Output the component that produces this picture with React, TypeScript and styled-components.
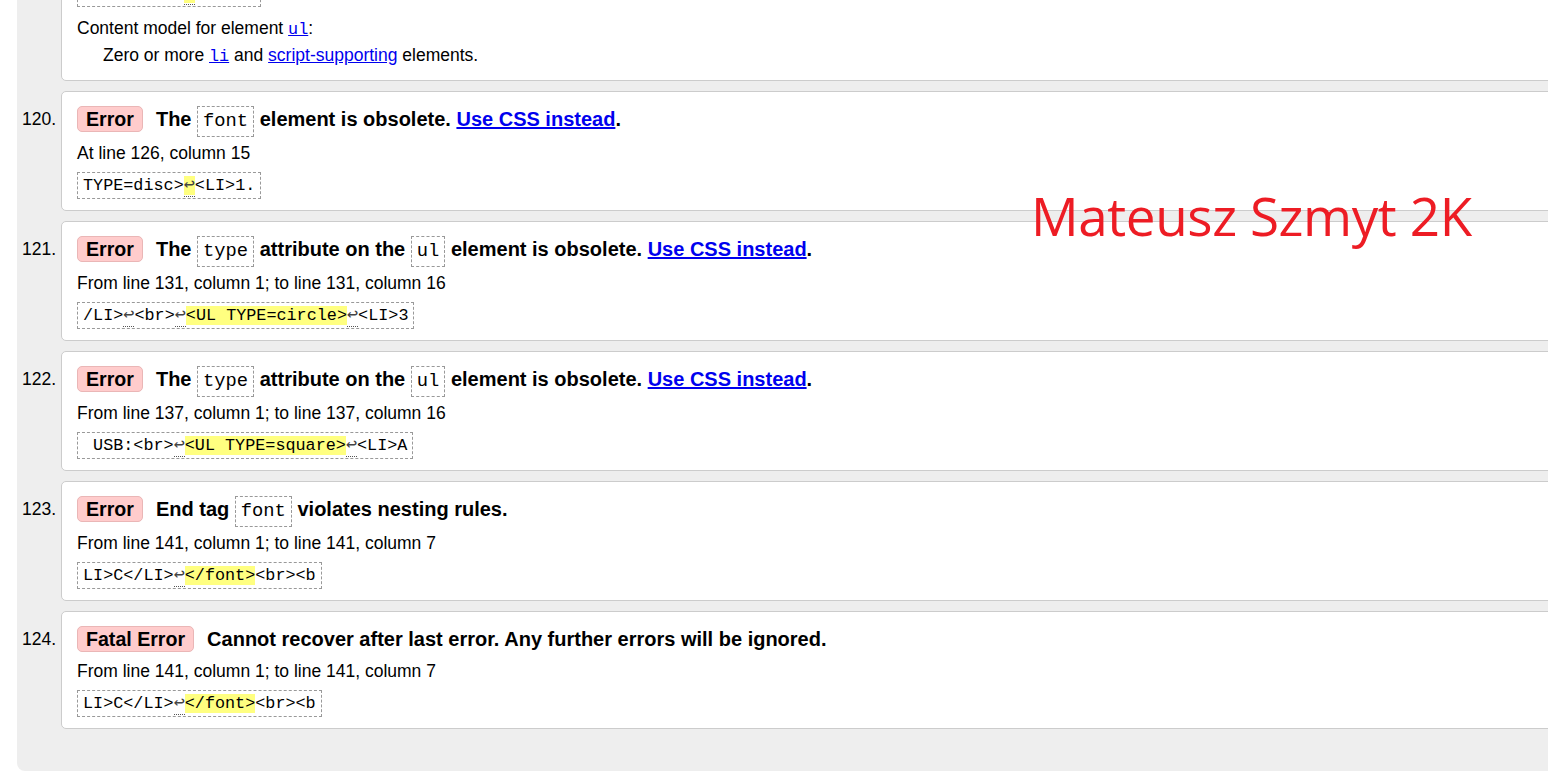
import React from "react";
import styled, { createGlobalStyle } from "styled-components";

const GlobalStyle = createGlobalStyle`
  html, body { margin: 0; padding: 0; background: #fff; }
  body {
    font-family: "Liberation Sans", Arial, sans-serif;
    font-size: 17.5px;
    color: #000;
    overflow: hidden;
  }
`;

const Page = styled.div`
  position: relative;
  height: 777px;
  overflow: hidden;
  padding-left: 17px;
`;

const Panel = styled.div`
  background: #eee;
  margin-top: -101px;
  width: calc(100% + 40px);
  border-bottom-left-radius: 8px;
  padding: 0 0 42px 5px;
  box-sizing: border-box;
`;

const List = styled.ol`
  list-style: none;
  margin: 0;
  padding: 0;
  display: flex;
  flex-direction: column;
  gap: 10px;
`;

const Item = styled.li`
  display: flex;
  align-items: flex-start;
`;

const Num = styled.div`
  width: 39px;
  flex: none;
  padding-top: 12px;
  line-height: 32px;
`;

const Card = styled.div`
  flex: 1;
  background: #fff;
  border: 1px solid #ccc;
  border-radius: 5px;
  padding: 11px 15px 11px 15px;
`;

const Heading = styled.p`
  margin: 0;
  font-size: 20px;
  font-weight: bold;
  line-height: 32px;
  white-space: nowrap;
`;

const Badge = styled.strong`
  display: inline-block;
  font-size: 19.6px;
  background: #fcc;
  border: 1px solid #eab6b6;
  border-radius: 5px;
  padding: 0 8px;
  line-height: 24px;
  margin-right: 13px;
`;

const InlineCode = styled.code`
  display: inline-block;
  font-family: "Liberation Mono", "DejaVu Sans Mono", monospace;
  font-weight: normal;
  font-size: 18.8px;
  line-height: 21px;
  padding: 4px 5px;
  border: 1px dashed #999;
`;

const Location = styled.p`
  margin: 4px 0 0;
  line-height: 24px;
`;

const Extract = styled.p`
  display: inline-block;
  margin: 7px 0 0;
  font-family: "Liberation Mono", "DejaVu Sans Mono", monospace;
  font-size: 16.8px;
  line-height: 21px;
  padding: 2px 5px;
  border: 1px dashed #999;
  white-space: pre;
`;

const Mark = styled.mark`
  background: #ffff80;
  color: inherit;
`;

const Lf = styled.span`
  border-bottom: 1px dotted #555;
  color: #444;
  font-size: 1.1em;
  line-height: 1;
`;

const A = styled.a`
  color: #00e;
  text-decoration: underline;
`;

const CodeLink = styled.a`
  color: #00e;
  text-decoration: underline;
  font-family: "Liberation Mono", "DejaVu Sans Mono", monospace;
  font-size: 16.8px;
`;

const Details = styled.dl`
  margin: 9px 0 0;
  line-height: 24px;
`;

const Dt = styled.dt`
  margin: 0;
`;

const Dd = styled.dd`
  margin: 1px 0 0 26px;
`;

const Watermark = styled.div`
  position: absolute;
  left: 1031px;
  top: 189px;
  font-family: "Open Sans", "Noto Sans", sans-serif;
  font-size: 53px;
  line-height: 54px;
  color: #ed1c24;
  white-space: nowrap;
  letter-spacing: -0.4px;
`;

type Seg = { t: string; kind?: "mark" | "lf" | "marklf" };

const Code = ({ segs }: { segs: Seg[] }) => (
  <Extract>
    {segs.map((s, i) =>
      s.kind === "mark" ? (
        <Mark key={i}>{s.t}</Mark>
      ) : s.kind === "lf" ? (
        <Lf key={i}>{s.t}</Lf>
      ) : s.kind === "marklf" ? (
        <Mark key={i}>
          <Lf>{s.t}</Lf>
        </Mark>
      ) : (
        <React.Fragment key={i}>{s.t}</React.Fragment>
      )
    )}
  </Extract>
);

const Css = () => (
  <>
    {" "}
    <A href="#">Use CSS instead</A>.
  </>
);

const LF = "\u21A9";

export default function App() {
  return (
    <Page>
      <GlobalStyle />
      <Panel>
        <List>
          <Item>
            <Num>119.</Num>
            <Card>
              <Heading>
                <Badge>Error</Badge>Element <InlineCode>font</InlineCode> not allowed as child of element{" "}
                <InlineCode>ul</InlineCode> in this context.
              </Heading>
              <Location>At line 126, column 15</Location>
              <Code segs={[{ t: "TYPE=disc>" }, { t: LF, kind: "marklf" }, { t: "<LI>1." }]} />
              <Details>
                <Dt>
                  Content model for element <CodeLink href="#">ul</CodeLink>:
                </Dt>
                <Dd>
                  Zero or more <CodeLink href="#">li</CodeLink> and <A href="#">script-supporting</A> elements.
                </Dd>
              </Details>
            </Card>
          </Item>
          <Item>
            <Num>120.</Num>
            <Card>
              <Heading>
                <Badge>Error</Badge>The <InlineCode>font</InlineCode> element is obsolete.
                <Css />
              </Heading>
              <Location>At line 126, column 15</Location>
              <Code segs={[{ t: "TYPE=disc>" }, { t: LF, kind: "marklf" }, { t: "<LI>1." }]} />
            </Card>
          </Item>
          <Item>
            <Num>121.</Num>
            <Card>
              <Heading>
                <Badge>Error</Badge>The <InlineCode>type</InlineCode> attribute on the <InlineCode>ul</InlineCode>{" "}
                element is obsolete.
                <Css />
              </Heading>
              <Location>From line 131, column 1; to line 131, column 16</Location>
              <Code
                segs={[
                  { t: "/LI>" },
                  { t: LF, kind: "lf" },
                  { t: "<br>" },
                  { t: LF, kind: "lf" },
                  { t: "<UL TYPE=circle>", kind: "mark" },
                  { t: LF, kind: "lf" },
                  { t: "<LI>3" },
                ]}
              />
            </Card>
          </Item>
          <Item>
            <Num>122.</Num>
            <Card>
              <Heading>
                <Badge>Error</Badge>The <InlineCode>type</InlineCode> attribute on the <InlineCode>ul</InlineCode>{" "}
                element is obsolete.
                <Css />
              </Heading>
              <Location>From line 137, column 1; to line 137, column 16</Location>
              <Code
                segs={[
                  { t: " USB:<br>" },
                  { t: LF, kind: "lf" },
                  { t: "<UL TYPE=square>", kind: "mark" },
                  { t: LF, kind: "lf" },
                  { t: "<LI>A" },
                ]}
              />
            </Card>
          </Item>
          <Item>
            <Num>123.</Num>
            <Card>
              <Heading>
                <Badge>Error</Badge>End tag <InlineCode>font</InlineCode> violates nesting rules.
              </Heading>
              <Location>From line 141, column 1; to line 141, column 7</Location>
              <Code
                segs={[
                  { t: "LI>C</LI>" },
                  { t: LF, kind: "lf" },
                  { t: "</font>", kind: "mark" },
                  { t: "<br><b" },
                ]}
              />
            </Card>
          </Item>
          <Item>
            <Num>124.</Num>
            <Card>
              <Heading>
                <Badge>Fatal Error</Badge>Cannot recover after last error. Any further errors will be ignored.
              </Heading>
              <Location>From line 141, column 1; to line 141, column 7</Location>
              <Code
                segs={[
                  { t: "LI>C</LI>" },
                  { t: LF, kind: "lf" },
                  { t: "</font>", kind: "mark" },
                  { t: "<br><b" },
                ]}
              />
            </Card>
          </Item>
        </List>
      </Panel>
      <Watermark>Mateusz Szmyt 2K</Watermark>
    </Page>
  );
}
